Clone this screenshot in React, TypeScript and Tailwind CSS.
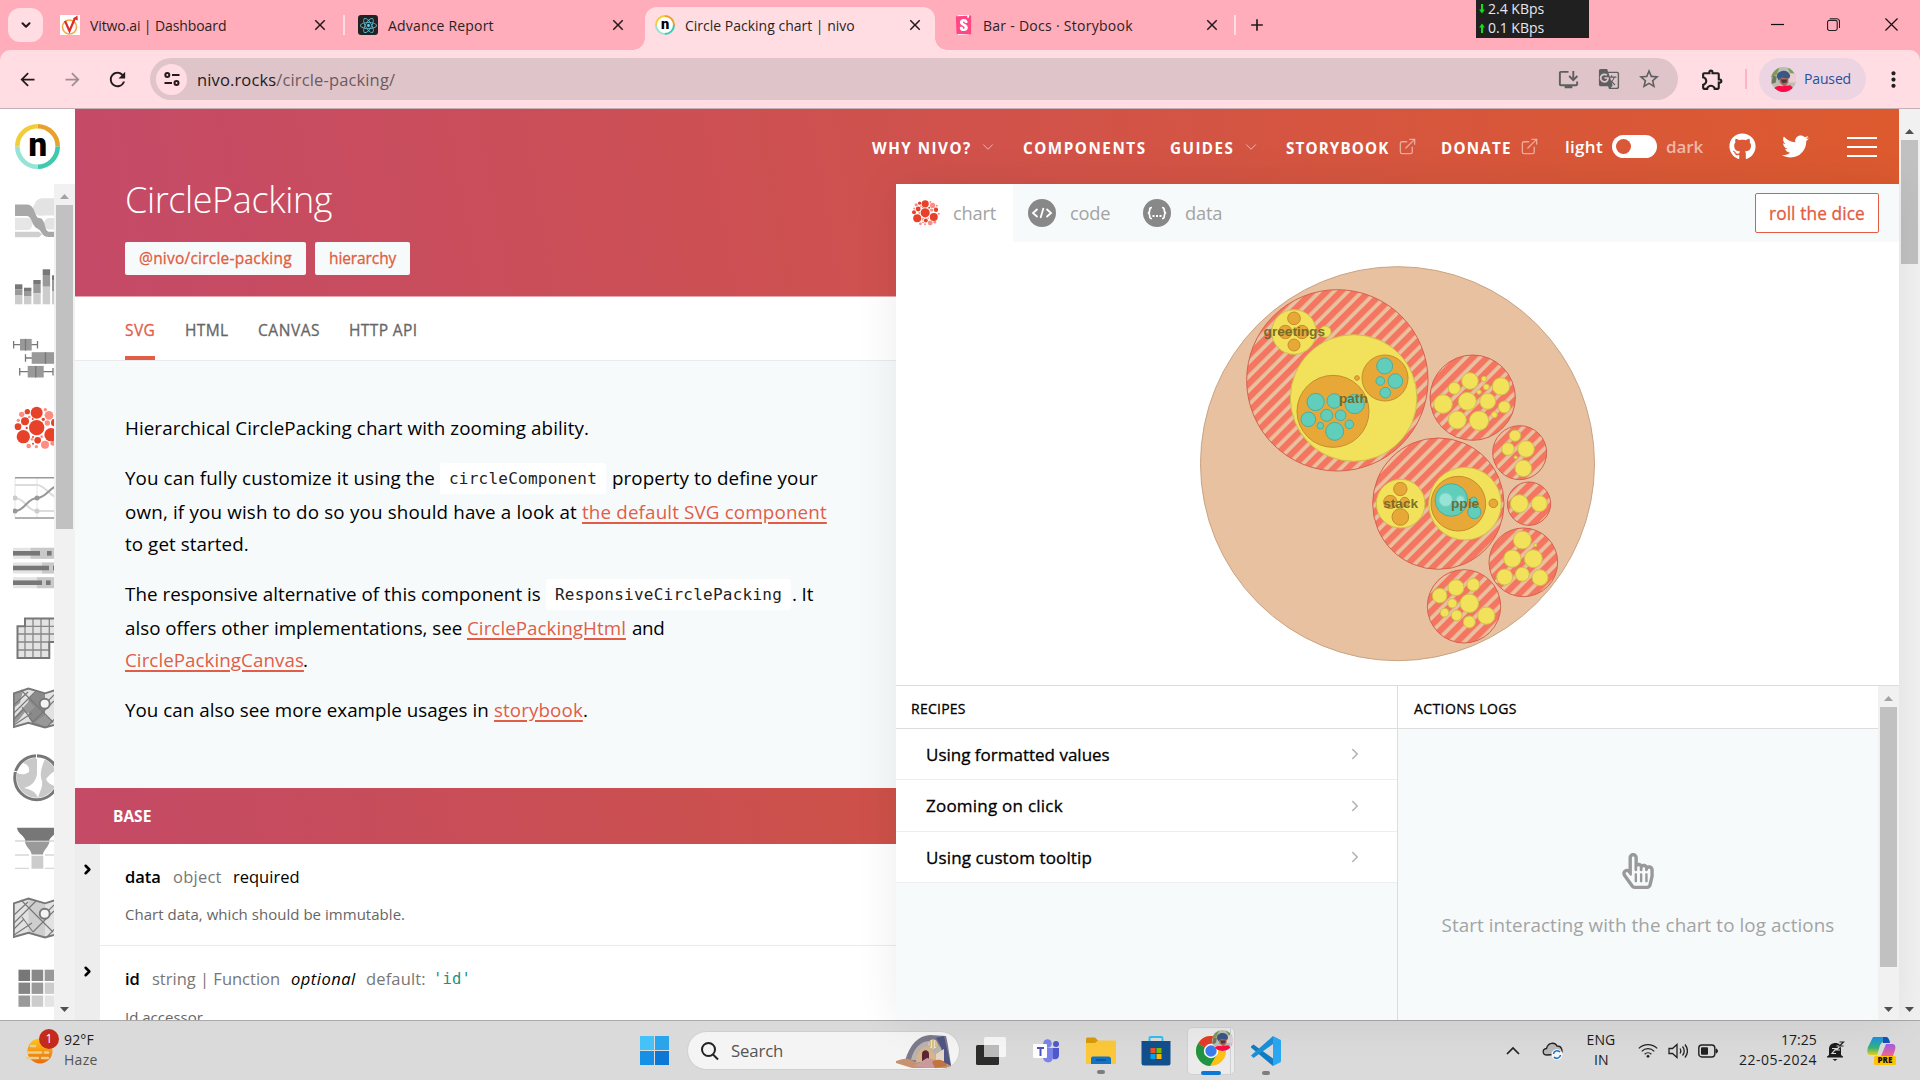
import React from "react";
import {
  MdArrowBack, MdArrowForward, MdRefresh, MdOutlineInstallDesktop, MdGTranslate,
  MdStarBorder, MdOutlineExtension, MdMoreVert, MdAdd, MdClose,
} from "react-icons/md";
import { FaGithub, FaTwitter, FaRegHandPointer, FaReact } from "react-icons/fa";
import { FiChevronDown, FiChevronRight, FiExternalLink } from "react-icons/fi";
import { SiStorybook } from "react-icons/si";

function T({ c, children }: { c: string; children: React.ReactNode }) {
  return <span className={"block shrink-0 whitespace-nowrap " + c}>{children}</span>;
}

function NivoLogo({ className }: { className: string }) {
  return (
    <svg viewBox="0 0 45 45" className={className}>
      <circle cx="22.5" cy="22.5" r="20" fill="#fff" />
      <g fill="none" strokeWidth="4.6">
        <path d="M22.5 2.3A20.2 20.2 0 0 1 42.7 22.5" stroke="#e8a12c" />
        <path d="M42.7 22.5A20.2 20.2 0 0 1 22.5 42.7" stroke="#3fc9ae" />
        <path d="M22.5 42.7A20.2 20.2 0 0 1 2.3 22.5" stroke="#97e3d5" />
        <path d="M2.3 22.5A20.2 20.2 0 0 1 22.5 2.3" stroke="#f1cd3a" />
      </g>
      <text x="22.9" y="31.6" textAnchor="middle" fontFamily="Roboto, sans-serif" fontWeight="900" fontSize="33" fill="#000">n</text>
    </svg>
  );
}

const packDark = [
  [110, 983, 23], [110, 938, 18], [70, 1010, 20], [153, 1004, 20], [75, 964, 12], [82, 935, 8],
  [54, 980, 10], [164, 968, 11], [113, 1021, 10], [130, 958, 5], [80, 984, 3.5], [98, 957, 3], [99, 1011, 3], [99, 1031, 3],
];
const packLight = [
  [147, 946, 13], [135, 1034, 12], [65, 943, 8], [136, 929, 5], [55, 961, 5], [142, 969, 8], [86, 1038, 7],
  [109, 1040, 5], [88, 951, 4], [96, 1018, 4], [158, 1030, 7], [125, 1010, 4], [178, 988, 5], [168, 948, 5],
];
function PackIcon({ className }: { className: string }) {
  return (
    <svg viewBox="39 909 150 150" className={className}>
      {packLight.map(([x, y, r], i) => <circle key={i} cx={x} cy={y} r={r} fill="#ff8c80" />)}
      {packDark.map(([x, y, r], i) => <circle key={i} cx={x} cy={y} r={r} fill="#e8412a" />)}
    </svg>
  );
}

function Tab({ icon, title, tw, active, w, close = "mr-[11px]", sep }: { icon: React.ReactNode; title: string; tw: string; active?: boolean; w: string; close?: string; sep?: boolean }) {
  return (
    <div className={"flex h-[43px] shrink-0 items-center rounded-t-[12px] pb-[7px] " + w + (active ? " bg-[#ffdde3]" : "")}>
      <div className="ml-[10px] size-[20px] shrink-0">{icon}</div>
      <T c={"ml-[10px] pt-px text-[14px] leading-[20px] text-[#2b1f22] " + tw}>{title}</T>
      <MdClose className={"ml-auto size-[18px] shrink-0 text-[#241a1c] " + close} />
      {sep && <div className="h-[20px] w-[2px] bg-[#ffdde3]" />}
    </div>
  );
}

function BrowserChrome() {
  return (
    <div className="h-[109px] w-full shrink-0 bg-[#ffacbb]">
      <div className="flex h-[50px] items-start">
        <div className="ml-[8px] mt-[8px] flex h-[34px] w-[35px] items-center justify-center rounded-[12px] bg-[#ffdde3]">
          <FiChevronDown className="size-[14px] stroke-[3.5] text-[#241a1c]" />
        </div>
        <div className="ml-[7px] flex pt-[7px]">
          <Tab w="w-[298px] pr-[3px]" close="mr-[14px]" tw="w-[136px] tracking-[-0.1px]" title="Vitwo.ai | Dashboard" sep icon={
            <svg viewBox="0 0 20 20" className="size-[20px]"><rect width="20" height="20" fill="#fff" /><circle cx="9.5" cy="12" r="7" fill="none" stroke="#f3a84b" strokeWidth="1.6" /><path d="M5 6l4.5 10L15 3" fill="none" stroke="#e02b2b" strokeWidth="2.2" /><path d="M13 3.5L17.5.5l.3 5z" fill="#e02b2b" /></svg>
          } />
          <Tab w="w-[297px]" close="mr-[18px]" tw="w-[106px] tracking-[0.18px]" title="Advance Report" icon={
            <div className="flex size-[20px] items-center justify-center rounded-[3px] bg-[#222]"><FaReact className="size-[17px] text-[#61c9e0]" /></div>
          } />
          <div className="relative">
            <Tab w="w-[290px]" active tw="w-[170px]" title="Circle Packing chart | nivo" icon={<NivoLogo className="size-[20px]" />} />
            <div className="absolute bottom-0 left-[-12px] size-[12px] bg-[radial-gradient(circle_at_0_0,transparent_11.5px,#ffdde3_12px)]" />
            <div className="absolute bottom-0 right-[-12px] size-[12px] bg-[radial-gradient(circle_at_100%_0,transparent_11.5px,#ffdde3_12px)]" />
          </div>
          <Tab w="w-[299px] pl-[8px]" close="mr-[13px]" tw="w-[150px] tracking-[0.27px]" title="Bar - Docs · Storybook" icon={
            <div className="flex size-[20px] items-center justify-center"><SiStorybook className="h-[20px] w-[19px] bg-[linear-gradient(90deg,transparent_20%,#fff_20%,#fff_80%,transparent_80%)] text-[#ff4785]" /></div>
          } />
          <div className="mt-[8px] h-[20px] w-[2px] bg-[#ffdde3]" />
          <MdAdd className="ml-[11px] mt-[8px] size-[20px] text-[#241a1c]" />
        </div>
        <div className="ml-[209px] h-[38px] w-[113px] bg-[#202020] pl-[3px]">
          <div className="flex h-[18px] items-center">
            <svg viewBox="0 0 7 12" className="h-[10px] w-[6px]"><path d="M2.3 0h2.4v6.5H7L3.500 11.500 0 6.500h2.300z" fill="#12e012" /></svg>
            <T c="ml-[3px] w-[56px] text-[14px] leading-[18px] text-[#e6e6f0]">2.4 KBps</T>
          </div>
          <div className="flex h-[19px] items-center">
            <svg viewBox="0 0 7 12" className="h-[10px] w-[6px] rotate-180"><path d="M2.3 0h2.4v6.5H7L3.500 11.500 0 6.500h2.300z" fill="#12e012" /></svg>
            <T c="ml-[3px] w-[56px] text-[14px] leading-[18px] text-[#e6e6f0]">0.1 KBps</T>
          </div>
        </div>
        <svg viewBox="0 0 14 14" className="ml-[182px] mt-[18px] h-[13px] w-[13px]"><path d="M0 7h14" stroke="#111" strokeWidth="1.3" /></svg>
        <svg viewBox="0 0 14 14" className="ml-[43px] mt-[18px] h-[13px] w-[13px]" fill="none" stroke="#222" strokeWidth="1.2"><rect x=".6" y="2.600" width="10.400" height="10.800" rx="2" /><path d="M3 .8h7.500a3 3 0 0 1 3 3v7" /></svg>
        <svg viewBox="0 0 14 14" className="ml-[45px] mt-[18px] h-[13px] w-[13px]"><path d="M.5.5l13 13M13.500.5l-13 13" stroke="#111" strokeWidth="1.3" /></svg>
      </div>
      <div className="flex h-[59px] items-start rounded-t-[10px] border-b border-[#c4b0b5] bg-[#ffdde3] pt-[8px]">
        <div className="flex h-[42px] items-center text-[#241a1c]">
          <MdArrowBack className="ml-[17px] size-[21px]" />
          <MdArrowForward className="ml-[24px] size-[21px] text-[#a08c91]" />
          <MdRefresh className="ml-[23px] size-[23px]" />
        </div>
        <div className="ml-[21px] flex h-[42px] w-[1528px] items-center rounded-full bg-[#dfc5ca]">
          <div className="ml-[6px] flex size-[31px] items-center justify-center rounded-full bg-[#ffdde3]">
            <svg viewBox="0 0 16 14" className="h-[14px] w-[16px]" fill="none" stroke="#241a1c" strokeWidth="2"><circle cx="3.300" cy="3" r="2" /><path d="M8 3h7.500M.5 11H8" /><circle cx="12.500" cy="11" r="2" /></svg>
          </div>
          <T c="ml-[10px] mt-[2px] w-[198px] text-[16.5px] leading-[24px] tracking-[0.14px] text-[#6b5b60]"><span className="text-[#241a1c]">nivo.rocks</span>/circle-packing/</T>
          <MdOutlineInstallDesktop className="ml-auto size-[23px] text-[#5f5f62]" />
          <MdGTranslate className="ml-[18px] size-[22px] text-[#5f5f62]" />
          <MdStarBorder className="ml-[17px] mr-[17px] size-[24px] text-[#5f5f62]" />
        </div>
        <div className="flex h-[42px] items-center">
          <MdOutlineExtension className="ml-[22px] size-[25px] text-[#1f1f1f]" />
          <div className="ml-[20px] h-[20px] w-[2px] bg-[#ffb3c0]" />
          <div className="ml-[12px] flex h-[42px] w-[107px] items-center rounded-full bg-[#ecd4e2]">
            <Avatar className="ml-[12px] size-[25px]" />
            <T c="ml-[8px] w-[47px] text-[14px] leading-[20px] tracking-[-0.14px] text-[#2550a0]">Paused</T>
          </div>
          <MdMoreVert className="ml-[15px] size-[25px] text-[#1f1f1f]" />
        </div>
      </div>
    </div>
  );
}

function Avatar({ className }: { className: string }) {
  return (
    <svg viewBox="0 0 26 26" className={className}>
      <defs><clipPath id="avatar-clip"><circle cx="13" cy="13" r="13" /></clipPath></defs>
      <g clipPath="url(#avatar-clip)">
        <rect width="26" height="26" fill="#b9bfb4" />
        <path d="M0 0h9l-3 8-6 3zM17 0h9v7l-6-1z" fill="#7d9b58" /><path d="M18 7h8v9h-8z" fill="#eccdd3" />
        <path d="M2 9l4 1-1 6-5 2z" fill="#6f7a5c" />
        <path d="M9 9h9v7l-4 5-5-5z" fill="#a86a55" />
        <path d="M6 10c0-7 12-9 14-1l-1 3-8-1-3 3z" fill="#3c5685" />
        <path d="M2 26c1-6 5-7 10-6l8-1c3 2 4 5 4 8z" fill="#fb0a45" />
        <path d="M10 13l7 0-1 3-4 1z" fill="#4e3540" />
      </g>
    </svg>
  );
}

function MapIcon({ dark }: { dark?: boolean }) {
  const s = "#777";
  return (
    <svg viewBox="0 0 50 50" className="size-[50px] shrink-0">
      <path d="M.8 10.300L15.500 5.500 32 10.300 48 5.500V40l-16 4.500-16.500-4.700L.8 44z" fill="#e2e2e2" />
      <path d="M15.500 5.500L32 10.300v34.200l-16.500-4.700z" fill={dark ? "#8a8a8a" : "#cecece"} />
      {dark && <path d="M.8 10.300L10 7.500 7 20 .8 25zM.8 35L16 18l6 6-12 10-9 7zM32 32l9 7-9 5-10-5z" fill="#989898" />}
      {dark && <path d="M10 7.500l5.500-2 8 3-8 7z M2 42l10-13 7 11z" fill="#e2e2e2" />}
      <g fill="none" stroke={s} strokeWidth="1.100">
        <path d="M1 30L23 8M1 22L15 9M8 7l24 24 8 8M1 36l10-10M9 24l11 15M1 42l18-12M20 39L41 18M34 44L48 29M41 12l-7 7" />
      </g>
      <path d="M.8 10.300L15.500 5.500 32 10.300 48 5.500V40l-16 4.500-16.500-4.700L.8 44z" fill="none" stroke={s} strokeWidth="1.900" />
      <circle cx="31.700" cy="20.700" r="5" fill="#f4f4f4" stroke={s} strokeWidth="1.900" />
    </svg>
  );
}

const stacked = [[2, 21.3, 26.3, 32], [11, 24.7, 28, 33], [20.3, 17, 21, 30.3], [29.7, 6.3, 12, 23.7], [39, 12.3, 17.7, 28]];
const boxes = [[11.7, 7, 18.7, 0.6, 24.5, 12.5], [25, 18.7, 44, 12.5, 50, 32.5], [38.7, 14.7, 30.7, 6.7, 40, 22.7]];
const heat = ["#777", "#888", "#999", "#858585", "#999", "#ccc", "#999", "#ccc", "#e4e4e4"];

function Sidebar() {
  const ic = "size-[50px] shrink-0";
  return (
    <div className="flex w-[75px] shrink-0 flex-col bg-white">
      <div className="flex h-[75px] shrink-0 items-center justify-center"><NivoLogo className="size-[45px]" /></div>
      <div className="flex min-h-0 flex-1">
        <div className="ml-[13px] flex w-[41px] shrink-0 flex-col gap-[20px] overflow-hidden pt-[9px]">
          <svg viewBox="0 0 50 50" className={ic}>
            <path d="M2 24.700H14C18 24.700 19 27 20 30l-1 3c-1 3-2 4-5 4H2z" fill="#e6e6e6" /><path d="M50 5.300H30C21 5.300 22 14 19 15c2 5 5 9 12 7.500h19zM50 25H36c-4 0-4 4-6 6 2 3 3 5.500 6 5.500h14z" fill="#e3e3e3" /><path d="M2 38.700h24l3 2.500-3 3.100H2z" fill="#cfcfcf" />
            <path d="M2 11.500h12C22 11.500 22 25 26 25c7 0 5 13.700 10 13.700h14V44H36c-8 0-7-7-11-8-6-2-6-13-11-13H2z" fill="#a8a8a8" />
          </svg>
          <svg viewBox="0 0 50 50" className={ic}>
            {stacked.map(([x, a, b, c]) => <g key={x}><rect x={x} y={a} width="7.400" height={b - a} fill="#777" /><rect x={x} y={b} width="7.400" height={c - b} fill="#999" /><rect x={x} y={c} width="7.400" height={41.3 - c} fill="#ccc" /></g>)}
          </svg>
          <svg viewBox="0 0 50 50" className={ic}>
            {boxes.map(([y, a, b, l, r, m]) => <g key={y} stroke="#777" strokeWidth="1.300"><path d={`M${l} ${y}H${r}M${l} ${y - 3.7}v7.400M${r} ${y - 3.7}v7.400`} fill="none" /><rect x={a} y={y - 5.8} width={b - a} height="11.600" fill="#999" stroke="none" /><path d={`M${m} ${y - 5.8}v11.600`} /></g>)}
          </svg>
          <PackIcon className={ic} />
          <svg viewBox="0 0 50 50" className={ic} fill="none">
            <path d="M2 5v40M24 5v40" stroke="#eee" strokeWidth="1.500" /><path d="M2 12h22c9 0 12 13 24 13M2 25c10 0 12 13 22 13h26" stroke="#dcdcdc" strokeWidth="2" /><path d="M2 38c10 0 12-13 22-13S37 12 48 12" stroke="#979797" strokeWidth="2" />
            <path d="M2 4.700h48M2 45h48" stroke="#999" strokeWidth="1.400" />
            <circle cx="2" cy="25" r="2.500" fill="#ccc" /><circle cx="24" cy="38" r="2.500" fill="#ccc" /><circle cx="24" cy="25" r="2.500" fill="#999" /><circle cx="2" cy="38" r="2.500" fill="#999" />
          </svg>
          <svg viewBox="0 0 50 50" className={ic}>
            {[[10.3, 27, 34, 17.7], [25, 36, 40, 29], [39.7, 29, 33, 24]].map(([y, w, s, k]) => <g key={y}><rect x="0" y={y - 5.5} width="50" height="11" fill="#e4e4e4" /><rect x={k} y={y - 5.5} width="50" height="11" fill="#c9c9c9" /><rect x="0" y={y - 2.3} width={w} height="4.600" fill="#777" /><rect x={s} y={y - 2.3} width="4.600" height="4.600" fill="#777" /></g>)}
          </svg>
          <svg viewBox="0 0 50 50" className={ic}>
            <path d="M4.500 13.300H12V5.500h38V29H36.300v16H4.500z" fill="#e3e3e3" /><path d="M12 13.300h38M4.500 21h46M4.500 29h32M4.500 37h32M12 13v32M20 5v40M28 5v40M36.300 5v30M44 5v24" stroke="#888" strokeWidth="1.300" />
            <path d="M4.500 13.300H12V5.500h38V29H36.300v16H4.500z" fill="none" stroke="#777" strokeWidth="2" />
          </svg>
          <MapIcon dark />
          <svg viewBox="0 0 50 50" className={ic}>
            <circle cx="23.700" cy="24.700" r="20" fill="#c9c9c9" /><path d="M24 4h9c-4 8-7 17-4 24 1 6-2 10-4 17-2-6-6-8-14-10 8-2 12-7 13-14zM2 19c3 2 9 4 14 0 1-5-2-8-6-9zM46 17c-5 0-9 4-13 9 2 5 6 6 13 9z" fill="#fff" />
            <circle cx="23.700" cy="24.700" r="22" fill="none" stroke="#777" strokeWidth="3" /><path d="M23.500 0v6M0 18l5 1" stroke="#fff" />
          </svg>
          <svg viewBox="0 0 50 50" className={ic}>
            <path d="M2 18h12M2 32h14M2 45.300h14M36 18h12M32 32h16M32 45.300h16" stroke="#d8d8d8" strokeWidth="1.300" />
            <path d="M4 4.700h41c-1 7-7 8-9 13H12.500C11 12 5 11 4 4.700z" fill="#777" /><path d="M12 18.500h24.500c-1 6-6 8-6.500 13H18.500c0-5-6-7-6.500-13z" fill="#9a9a9a" /><path d="M18.500 32.700h11.800v13H18.500z" fill="#ccc" />
          </svg>
          <MapIcon />
          <svg viewBox="0 0 50 50" className={ic}>
            {heat.map((f, i) => <rect key={i} x={5.5 + (i % 3) * 13.1} y={6.7 + Math.floor(i / 3) * 12.9} width="11.600" height="11.300" fill={f} />)}
          </svg>
        </div>
        <Scrollbar w="w-[21px]" thumb="h-[324px] w-[17px]" top="text-[#a3a3a3]" />
      </div>
    </div>
  );
}

function Scrollbar({ w, thumb, top }: { w: string; thumb: string; top: string }) {
  return (
    <div className={"flex shrink-0 flex-col items-center bg-[#f1f1f1] " + w}>
      <div className={"flex h-[21px] shrink-0 items-center justify-center pt-[3px] " + top}><svg viewBox="0 0 9 5" className="h-[5px] w-[9px]"><path d="M0 5L4.500 0 9 5z" fill="currentColor" /></svg></div>
      <div className={"shrink-0 bg-[#c1c1c1] " + thumb} />
      <div className="mt-auto flex h-[22px] items-center text-[#505050]"><svg viewBox="0 0 9 5" className="h-[5px] w-[9px]"><path d="M0 0L4.500 5 9 0z" fill="currentColor" /></svg></div>
    </div>
  );
}

function Nav() {
  const n = "mt-[2px] text-[15.2px] font-bold leading-[20px] ";
  return (
    <div className="flex h-[75px] w-full shrink-0 items-center bg-[linear-gradient(80deg,#c44a68,#dd5a2e)] bg-[length:1824px_187px] text-white">
      <T c={n + "ml-[797px] w-[100px] tracking-[1.5px]"}>WHY NIVO?</T>
      <FiChevronDown className="ml-[7px] size-[18px] stroke-[1.3] opacity-60" />
      <T c={n + "ml-[26px] w-[123px] tracking-[1.55px]"}>COMPONENTS</T>
      <T c={n + "ml-[24px] w-[65px] tracking-[1.45px]"}>GUIDES</T>
      <FiChevronDown className="ml-[7px] size-[18px] stroke-[1.3] opacity-60" />
      <T c={n + "ml-[26px] w-[105px] tracking-[1.15px]"}>STORYBOOK</T>
      <FiExternalLink className="ml-[7px] size-[19px] stroke-[1.7] opacity-50" />
      <T c={n + "ml-[24px] w-[71px] tracking-[1.2px]"}>DONATE</T>
      <FiExternalLink className="ml-[8px] size-[19px] stroke-[1.7] opacity-50" />
      <T c="ml-[26px] w-[38px] text-[17px] font-semibold leading-[22px] tracking-[0.3px]">light</T>
      <div className="ml-[9px] flex h-[23px] w-[45px] items-center rounded-full bg-white pl-[4px]"><div className="size-[15px] rounded-full bg-[#d95837]" /></div>
      <T c="ml-[9px] w-[37px] text-[17px] font-semibold leading-[22px] tracking-[-0.13px] text-[#f0b8a6]">dark</T>
      <FaGithub className="ml-[26px] size-[27px]" />
      <FaTwitter className="ml-[26px] size-[27px]" />
      <div className="ml-[38px] flex w-[30px] flex-col gap-[7px]"><i className="h-[2px] bg-white" /><i className="h-[2px] bg-white" /><i className="h-[2px] bg-white" /></div>
    </div>
  );
}

const P = "text-[18.8px] text-black ";
const A = "text-[18.8px] text-[#e25d47] underline decoration-2 underline-offset-[3px] ";
const CODE = "flex h-[31px] items-center rounded-[3px] bg-white px-[9px] text-[#222] ";
const MONO = "pt-[2px] font-['DejaVu_Sans_Mono',monospace] text-[16px] tracking-[0.24px] ";
const MEDIUM = "[-webkit-text-stroke:0.3px_currentColor] ";

function Left() {
  return (
    <div className="flex w-[821px] shrink-0 flex-col bg-white">
      <div className="h-[113px] shrink-0 border-b border-[#e9a6ab] bg-[linear-gradient(80deg,#c44a68,#dd5a2e)] bg-[length:1824px_187px] bg-[position:0_-75px] pl-[50px]">
        <T c="h-[32px] w-[207px] text-[36px] font-light leading-[32px] tracking-[-0.4px] text-white">CirclePacking</T>
        <div className={MEDIUM + "mt-[26px] flex gap-[9px] text-[15.5px] text-[#e25d41]"}>
          <div className="flex h-[33px] w-[181px] items-center justify-center rounded-[2px] bg-[#f6fafb]"><T c="w-[153px] tracking-[0.23px]">@nivo/circle-packing</T></div>
          <div className="flex h-[33px] w-[95px] items-center justify-center rounded-[2px] bg-[#f6fafb]"><T c="w-[67px] tracking-[-0.1px]">hierarchy</T></div>
        </div>
      </div>
      <div className={MEDIUM + "flex h-[64px] shrink-0 items-end gap-[30px] border-b border-[#e8ebec] pl-[50px] text-[15.5px] leading-[20px] tracking-[0.4px] text-[#666]"}>
        <div className="border-b-4 border-[#e25d47] pb-[16px] text-[#e25d47]"><T c="w-[30px]">SVG</T></div>
        <div className="pb-[20px]"><T c="w-[43px]">HTML</T></div>
        <div className="pb-[20px]"><T c="w-[61px] tracking-[0.55px]">CANVAS</T></div>
        <div className="pb-[20px]"><T c="w-[68px]">HTTP API</T></div>
      </div>
      <div className="h-[427px] shrink-0 bg-[#f6fafb] pl-[50px] pt-[51px]">
        <div className="flex h-[32px] items-center"><T c={P + "w-[464px] tracking-[0.08px]"}>Hierarchical CirclePacking chart with zooming ability.</T></div>
        <div className="mt-[18px] flex h-[32px] items-center">
          <T c={P + "w-[310px] tracking-[0.1px]"}>You can fully customize it using the</T>
          <div className={CODE + "ml-[5px] w-[166px]"}><T c={MONO + "w-[147px]"}>circleComponent</T></div>
          <T c={P + "ml-[6px] w-[206px] tracking-[0.08px]"}>property to define your</T>
        </div>
        <div className="mt-[2px] flex h-[32px] items-center">
          <T c={P + "w-[452px] tracking-[0.17px]"}>own, if you wish to do so you should have a look at</T>
          <T c={A + "ml-[5px] w-[245px] tracking-[0.15px]"}>the default SVG component</T>
        </div>
        <div className="flex h-[32px] items-center"><T c={P + "w-[124px] tracking-[0.08px]"}>to get started.</T></div>
        <div className="mt-[18px] flex h-[32px] items-center">
          <T c={P + "w-[416px] tracking-[0.035px]"}>The responsive alternative of this component is</T>
          <div className={CODE + "ml-[5px] w-[245px]"}><T c={MONO + "w-[227px]"}>ResponsiveCirclePacking</T></div>
          <T c={P + "ml-[1px] w-[21px] tracking-[-0.1px]"}>. It</T>
        </div>
        <div className="mt-[2px] flex h-[32px] items-center">
          <T c={P + "w-[337px]"}>also offers other implementations, see</T>
          <T c={A + "ml-[5px] w-[159px] tracking-[0.04px]"}>CirclePackingHtml</T>
          <T c={P + "ml-[6px] w-[32px] tracking-[-0.4px]"}>and</T>
        </div>
        <div className="flex h-[32px] items-center"><T c={A + "w-[178px] tracking-[0.04px]"}>CirclePackingCanvas</T><T c={P + "w-[5px]"}>.</T></div>
        <div className="mt-[18px] flex h-[32px] items-center"><T c={P + "w-[364px] tracking-[0.03px]"}>You can also see more example usages in</T><T c={A + "ml-[5px] w-[89px] tracking-[0.1px]"}>storybook</T><T c={P + "w-[5px]"}>.</T></div>
      </div>
      <div className="flex h-[56px] shrink-0 items-center bg-[linear-gradient(80deg,#c44a66,#cd5148)] pl-[38px] pt-[2px]"><T c="w-[39px] text-[15.5px] font-bold text-white">BASE</T></div>
      <div className="flex min-h-0 flex-1">
        <div className="flex w-[25px] shrink-0 flex-col items-center bg-[#ededed] pt-[18px]">
          <FiChevronRight className="size-[15px] stroke-[4] text-black" />
          <FiChevronRight className="mt-[87px] size-[15px] stroke-[4] text-black" />
        </div>
        <div className="flex-1 overflow-hidden text-[16.500px] leading-[24px]">
          <div className="h-[102px] border-b border-[#ebebeb] pl-[25px] pt-[21px]">
            <div className="flex">
              <T c="w-[36px] font-semibold text-black">data</T>
              <T c="ml-[12px] w-[49px] tracking-[0.25px] text-[#777]">object</T>
              <T c="ml-[11px] w-[67px] text-black">required</T>
            </div>
            <T c="mt-[13px] w-[280px] text-[15px] tracking-[0.03px] text-[#666]">Chart data, which should be immutable.</T>
          </div>
          <div className="pl-[25px] pt-[21px]">
            <div className="flex">
              <T c="w-[15px] font-semibold text-black">id</T>
              <T c="ml-[12px] w-[128px] text-[#777]">string | Function</T>
              <T c="ml-[11px] w-[65px] tracking-[0.5px] italic text-black">optional</T>
              <T c="ml-[10px] w-[60px] tracking-[0.15px] text-[#777]">default:</T>
              <T c="ml-[7px] w-[38px] font-['DejaVu_Sans_Mono',monospace] text-[15.5px] tracking-[0.2px] text-[#1a9186]">'id'</T>
            </div>
            <T c="mt-[14px] w-[77px] text-[15px] text-[#666]">Id accessor</T>
          </div>
        </div>
      </div>
    </div>
  );
}

const red = [[472, 391, 272], [878, 443, 128], [1019, 608, 81], [775, 761, 197], [1047, 761, 65], [1030, 937, 103], [852, 1069, 110]];
const yellow = [
  [342, 246, 67], [436, 245, 17], [521, 444, 190], [662, 761, 73], [855, 761, 109],
  [870, 393, 25], [912, 387, 8], [963, 409, 26], [823, 415, 18], [919, 411, 9], [897, 426, 7], [789, 462, 28], [862, 454, 27], [923, 454, 24], [973, 471, 18], [943, 494, 9], [832, 510, 27], [897, 512, 29],
  [1005, 557, 17], [984, 597, 19], [1038, 597, 25], [1007, 622, 5], [1030, 655, 25],
  [1018, 761, 27], [1078, 761, 24],
  [1027, 870, 27], [1066, 885, 5], [997, 926, 26], [1060, 926, 27], [974, 981, 24], [1027, 973, 21], [1080, 983, 24],
  [828, 1013, 24], [880, 1004, 19], [779, 1037, 22], [817, 1060, 14], [868, 1060, 28], [794, 1088, 13], [830, 1096, 16], [868, 1116, 18], [919, 1097, 26],
];
const orange = [[342, 205, 19], [316, 246, 20], [366, 246, 20], [342, 285, 18], [459, 484, 108], [615, 384, 69], [531, 384, 7], [661, 717, 20], [631, 756, 20], [674, 756, 14], [661, 801, 25], [835, 761, 82], [940, 760, 13]];
const teal = [[614, 348, 24], [646, 393, 22], [601, 393, 13], [616, 428, 16], [407, 456, 26], [463, 453, 22], [524, 462, 29], [385, 508, 22], [440, 496, 18], [482, 496, 16], [421, 527, 10], [508, 523, 13], [464, 544, 27], [814, 750, 49], [881, 751, 10], [883, 786, 20]];
const mint = [[797, 749, 20], [841, 749, 12]];

function CirclePacking() {
  const ring = (list: number[][], fill: string, stroke: string) => list.map(([x, y, r], i) => <circle key={fill + i} cx={x} cy={y} r={r} fill={fill} stroke={stroke} strokeWidth="3" />);
  return (
    <svg viewBox="0 0 1290 1260" className="h-[420px] w-[430px] shrink-0">
      <defs>
        <pattern id="stripes" width="30" height="30" patternUnits="userSpaceOnUse" patternTransform="rotate(-45)"><rect width="30" height="18.750" fill="#f47560" /></pattern>
      </defs>
      {ring([[652.5, 641, 591]], "#e8c1a0", "#c9a483")}
      {ring(red, "url(#stripes)", "#d5604e")}
      {ring(yellow, "#f1e15b", "#cfc04a")}
      {ring(orange, "#e8a838", "#c58d2d")}
      {ring(teal, "#61cdbb", "#4eac9d")}
      {ring(mint, "#97e3d5", "#7fd2c3")}
      <g fontFamily="'Liberation Sans', Arial, sans-serif" fontWeight="700" fontSize="41" fill="#6e6524" fillOpacity=".92" textAnchor="middle">
        <text x="343" y="258">greetings</text><text x="520" y="459">path</text><text x="662" y="774">stack</text><text x="855" y="774">ppie</text>
      </g>
    </svg>
  );
}

function Right() {
  const tab = "text-[18.300px] leading-[24px] tracking-[-0.2px] text-[#a3a3a3] ";
  return (
    <div className="relative z-10 flex min-w-0 flex-1 flex-col bg-[#f6fafb] shadow-[0_0_40px_rgba(0,0,0,0.08)]">
      <div className="flex h-[58px] shrink-0 items-stretch">
        <div className="flex w-[117px] items-center bg-white"><PackIcon className="ml-[15px] size-[30px]" /><T c={tab + "ml-[12px] w-[42px]"}>chart</T></div>
        <div className="flex flex-1 items-center">
          <svg viewBox="0 0 28 28" className="ml-[15px] size-[28px]"><circle cx="14" cy="14" r="14" fill="#888" /><path d="M9.500 10L5 14l4.500 4M18.500 10l4.500 4-4.500 4M15.500 9l-3 10" fill="none" stroke="#fff" strokeWidth="1.800" /></svg>
          <T c={tab + "ml-[14px] w-[41px]"}>code</T>
          <svg viewBox="0 0 28 28" className="ml-[32px] size-[28px]"><circle cx="14" cy="14" r="14" fill="#888" /><g fill="none" stroke="#fff" strokeWidth="1.700"><path d="M9 8.500c-2 0-2.300.8-2.300 2.500S6.500 14 4.800 14c1.700 0 1.900 1 1.900 3s.3 2.500 2.300 2.500M19 8.500c2 0 2.300.8 2.300 2.500s.2 3 1.900 3c-1.700 0-1.900 1-1.900 3s-.3 2.500-2.300 2.500" /><path d="M9.500 17h2M13 17h2M16.500 17h2" strokeWidth="2" /></g></svg>
          <T c={tab + "ml-[14px] w-[37px]"}>data</T>
          <div className={MEDIUM + "ml-auto mr-[20px] flex h-[40px] w-[124px] items-center justify-center rounded-[2px] border border-[#e25d41] bg-white pt-px text-[17.3px] text-[#e25d41]"}><T c="w-[96px] tracking-[0.1px]">roll the dice</T></div>
        </div>
      </div>
      <div className="flex h-[444px] shrink-0 border-b border-[#ddd] bg-white pl-[284px] pt-[8px]"><CirclePacking /></div>
      <div className="flex min-h-0 flex-1">
        <div className="flex w-[502px] shrink-0 flex-col border-r border-[#ddd]">
          <div className={MEDIUM + "flex h-[43px] shrink-0 items-center border-b border-[#ddd] bg-white pl-[15px] pt-[2px] text-[14px] text-black"}><T c="w-[55px] tracking-[0.25px]">RECIPES</T></div>
          {[["Using formatted values", "w-[184px]", "h-[51px]"], ["Zooming on click", "w-[137px] tracking-[0.23px]", "h-[52px]"], ["Using custom tooltip", "w-[166px] tracking-[0.12px]", "h-[51px]"]].map(([t, w, h]) => (
            <div key={t} className={MEDIUM + "flex shrink-0 items-center border-b border-[#eceeef] bg-white pl-[30px] text-[17px] text-black " + h}>
              <T c={"pt-px " + w}>{t}</T><FiChevronRight className="ml-auto mr-[33px] size-[18px] text-[#b0b0b0]" />
            </div>
          ))}
        </div>
        <div className="flex flex-1 flex-col">
          <div className={MEDIUM + "flex h-[43px] shrink-0 items-center border-b border-[#ddd] bg-white pl-[16px] pt-[2px] text-[14px] text-black"}><T c="w-[103px] tracking-[0.4px]">ACTIONS LOGS</T></div>
          <div className="flex flex-col items-center pt-[124px]">
            <FaRegHandPointer className="size-[36px] text-[#999]" />
            <T c="mt-[23px] w-[393px] text-[18.800px] leading-[26px] tracking-[0.1px] text-[#a3a3a3]">Start interacting with the chart to log actions</T>
          </div>
        </div>
        <Scrollbar w="w-[21px]" thumb="h-[260px] w-[17px]" top="text-[#a3a3a3]" />
      </div>
    </div>
  );
}

function TrayIcons() {
  return (
    <>
      <svg viewBox="0 0 24 18" className="ml-[22px] h-[15px] w-[20px]" fill="none" stroke="#222" strokeWidth="1.500"><path d="M1 6.500a15.500 15.500 0 0 1 22 0M4.500 10a10.500 10.500 0 0 1 15 0M8 13.500a5.700 5.700 0 0 1 8 0" /><circle cx="12" cy="16" r="1.700" fill="#222" stroke="none" /></svg>
      <svg viewBox="0 0 20 18" className="ml-[10px] h-[18px] w-[20px]" fill="none" stroke="#222" strokeWidth="1.300"><path d="M1 6.500h3.500L9 2.500v13L4.500 11.500H1z" /><path d="M12 6.500c1 1.500 1 3.500 0 5M14.500 4.500c2.300 2.500 2.300 6.500 0 9M17 2.500c3 4 3 9 0 13" /></svg>
      <svg viewBox="0 0 20 14" className="ml-[10px] h-[14px] w-[20px]"><rect x=".8" y="1" width="16" height="12" rx="3" fill="none" stroke="#222" strokeWidth="1.400" /><rect x="3" y="3.200" width="7" height="7.600" rx="1" fill="#222" /><path d="M18 5c2 0 2 4 0 4z" fill="#222" stroke="#222" /></svg>
    </>
  );
}

function Taskbar() {
  return (
    <div className="flex h-[60px] w-full shrink-0 items-center border-t border-[#a9a9a9] bg-[#dadada] text-[14px] leading-[20px] text-[#1c1c1c]">
      <div className="relative ml-[25px]">
        <svg viewBox="0 0 28 28" className="size-[28px]"><defs><linearGradient id="sun" x2="0" y2="1"><stop stopColor="#ffc61a" /><stop offset="1" stopColor="#ea6a10" /></linearGradient></defs><circle cx="15" cy="14" r="12.500" fill="url(#sun)" /><path d="M6 9h4M3 15.500h13M20 15.500h3M2 21h11M17 21h6" stroke="#ead08c" strokeWidth="2.600" strokeLinecap="round" /></svg>
        <div className="absolute right-[-6px] top-[-8px] flex size-[20px] items-center justify-center rounded-full bg-[#c42b1c] text-[12px] text-white">1</div>
      </div>
      <div className="ml-[11px] w-[60px] pb-px"><T c="w-[30px] tracking-[0.15px]">92°F</T><T c="w-[34px] tracking-[0.3px] text-[#555]">Haze</T></div>
      <div className="ml-[516px] grid size-[29px] grid-cols-2 gap-px"><i className="bg-[#45c2f7]" /><i className="bg-[#2aa5ec]" /><i className="bg-[#1590e6]" /><i className="bg-[#0a78d4]" /></div>
      <div className="ml-[18px] flex h-[39px] w-[273px] items-center rounded-full border border-[#cfcfcf] bg-[#f4f4f4]">
        <svg viewBox="0 0 20 20" className="ml-[12px] size-[20px]" fill="none" stroke="#222" strokeWidth="2"><circle cx="8.500" cy="8.500" r="6.500" /><path d="M13 13.500l5 5" /></svg>
        <T c="ml-[11px] w-[52px] text-[16.800px] tracking-[-0.15px] text-[#555]">Search</T>
        <svg viewBox="0 0 57 34" className="ml-auto mr-[6px] h-[34px] w-[57px]">
          <path d="M9 27C14 10 22 2 34 1l16 1c2 8 3 16 5 29H40z" fill="#7d7a8c" /><path d="M15 26c2-10 9-19 18-19 10 0 14 8 16 20z" fill="#b8b3ae" /><path d="M48 2l7 30h-7c0-10-2-20-8-28z" fill="#4f5584" />
          <path d="M20 28c0-8 5-15 10-15s10 6 10 15z" fill="#d7b48a" /><path d="M26 29V20c0-5 7-5 7 0v9z" fill="#592638" /><circle cx="37" cy="10" r="4.500" fill="#e9e3c8" /><path d="M34 7v6M37 6v8M40 7v6" stroke="#c7972f" strokeWidth=".9" />
          <path d="M40 20l8-5v12l-8 2z" fill="#e3d6c6" /><path d="M0 27c6-2 11-4 17 0l5 2 8-2 12 4c5-3 9-2 13 1l-5 2H16L0 29z" fill="#c89170" /><path d="M18 32l13-8 9 2 4 7-12 1z" fill="#c99a9a" /><path d="M36 28c5-4 12-3 15 4l-12 2z" fill="#c17340" />
        </svg>
      </div>
      <svg viewBox="0 0 30 28" className="ml-[16px] h-[28px] w-[30px]"><rect y="8" width="23" height="20" rx="1.500" fill="#2d2d2b" /><rect x="8" y="0" width="22" height="20" rx="1.500" fill="#f6f6f6" /><rect x="8" y="8" width="15" height="12" fill="#bcbcbc" /></svg>
      <svg viewBox="0 0 27 24" className="ml-[27px] h-[24px] w-[27px]"><circle cx="14.500" cy="4.500" r="4.300" fill="#7b83eb" /><circle cx="23" cy="5" r="3" fill="#5059c9" /><path d="M19 9h7v7c0 4-3 5-6 4z" fill="#5059c9" /><path d="M9 9h11v9c0 7-9 7-10 1z" fill="#7b83eb" /><rect y="5" width="14" height="14" rx="1" fill="#fff" /><path d="M4 9h7M7.500 9v8" stroke="#4b53bc" strokeWidth="2" /></svg>
      <div className="relative ml-[26px]">
        <svg viewBox="0 0 30 27" className="h-[27px] w-[30px]"><path d="M0 2a1.500 1.500 0 0 1 1.500-1.500H9l3 3V8H0z" fill="#d99a08" /><path d="M0 6h9l3-2.500h17l1 1V27H0z" fill="#fcc83a" /><path d="M5 27v-5c0-2 1-2.500 2.500-2.500h15c1.500 0 2.500 1 2.500 2.500v5z" fill="#1173c7" /><path d="M10 23h10" stroke="#0a4f90" strokeWidth="1.500" /></svg>
        <div className="absolute left-[11px] top-[33px] h-[4px] w-[8px] rounded-full bg-[#7d7d7d]" />
      </div>
      <svg viewBox="0 0 30 30" className="ml-[25px] size-[30px]"><path d="M8.500 6V2.500C8.500 1 9.500 1 10 1h10c1 0 1.500.5 1.500 1.500V6" fill="none" stroke="#2bc0f5" strokeWidth="1.900" /><path d="M.5 5h29v22a2.500 2.500 0 0 1-2.500 2.500H3A2.500 2.500 0 0 1 .5 27z" fill="#11508c" /><path d="M9.500 12h5v5h-5z" fill="#f25022" /><path d="M15.500 12h5v5h-5z" fill="#7fba00" /><path d="M9.500 18h5v5h-5z" fill="#00a4ef" /><path d="M15.500 18h5v5h-5z" fill="#ffb900" /></svg>
      <div className="relative ml-[16px] flex h-[48px] w-[48px] items-center rounded-[5px] border border-[#d0d0d0] bg-[#ebebeb] pl-[8px]">
        <svg viewBox="0 0 30 30" className="size-[30px]"><circle cx="15" cy="15" r="15" fill="#fbc116" /><path d="M15 15L2 7.500A15 15 0 0 1 28 7.500H15z" fill="#e33b2e" /><path d="M15 15L2 7.500A15 15 0 0 0 14 30l7-12z" fill="#229342" /><circle cx="15" cy="15" r="7.200" fill="#fff" /><circle cx="15" cy="15" r="5.700" fill="#3b7ded" /></svg>
        <Avatar className="absolute left-[24px] top-[2px] size-[21px]" />
        <div className="absolute right-[3px] top-0 h-[46px] w-px bg-[#cfcfcf]" />
        <div className="absolute left-[13px] top-[43px] h-[4px] w-[20px] rounded-full bg-[#0a78d4]" />
      </div>
      <div className="relative ml-[16px]">
        <svg viewBox="0 0 30 30" className="size-[30px]"><path d="M0 10.500l2.500-2 19.500 14V30L0 11.500z" fill="#0f7cc4" /><path d="M0 19.500L22 0v8L2.500 22z" fill="#1b8fd8" /><path d="M22 0l7 3.500c.7.300 1 .8 1 1.500v20c0 .7-.3 1.200-1 1.500L22 30z" fill="#2aa7f2" /></svg>
        <div className="absolute left-[11px] top-[35px] h-[4px] w-[8px] rounded-full bg-[#7d7d7d]" />
      </div>
      <svg viewBox="0 0 14 9" className="ml-[225px] h-[9px] w-[14px]"><path d="M1 8l6-6 6 6" fill="none" stroke="#222" strokeWidth="1.700" /></svg>
      <svg viewBox="0 0 21 18" className="ml-[22px] h-[18px] w-[21px]"><path d="M5 13C0 13 0 7 4.500 6.500 6 0 13 0 15 4c5 0 6 5 4 8z" fill="#b9b9b9" stroke="#222" strokeWidth="1.300" /><circle cx="15" cy="12.500" r="5.500" fill="#f5f5f5" /><path d="M11.500 12a3.700 3.700 0 0 1 6.500-2M18.500 13a3.700 3.700 0 0 1-6.500 2" fill="none" stroke="#1270c8" strokeWidth="1.500" /></svg>
      <div className="ml-[23px] flex w-[30px] flex-col items-center pb-px"><T c="w-[29px] tracking-[0.1px]">ENG</T><T c="w-[14px]">IN</T></div>
      <TrayIcons />
      <div className="ml-[19px] flex w-[80px] flex-col items-end pb-px"><T c="w-[36px]">17:25</T><T c="w-[78px] tracking-[0.49px]">22-05-2024</T></div>
      <svg viewBox="0 0 18 20" className="ml-[10px] h-[20px] w-[18px]"><path d="M2 14V8c0-4 3-6 6.500-6S14 4 14 8v6l2 1.500v1H0v-1z" fill="#1c1c1c" /><path d="M5.500 18h5l-2.500 2z" fill="#1c1c1c" /><path d="M5 7.500h4l-4 5h4M12.500 1h4l-4 4.500h4M9.500 5h3.500l-3.500 4h3.500" fill="none" stroke="#dadada" strokeWidth="1.200" /><path d="M12.500 1h4l-4 4h4" fill="none" stroke="#222" strokeWidth="1.200" /></svg>
      <svg viewBox="0 0 29 29" className="ml-[22px] size-[29px]">
        <defs><linearGradient id="cpa" x2="0" y2="1"><stop stopColor="#1690ea" /><stop offset=".6" stopColor="#38b27a" /><stop offset="1" stopColor="#e8cf1a" /></linearGradient><linearGradient id="cpb" x2="0" y2="1"><stop stopColor="#a45be8" /><stop offset="1" stopColor="#f0668a" /></linearGradient></defs>
        <path d="M6 1h13c2 0 3 2 4 5h-6c-3 0-4 3-5 7l-2 6H3c-3 0-3-4-2-8z" fill="url(#cpa)" /><path d="M16 1h3c2 0 3 2 4 6h-7z" fill="#1452b8" /><path d="M19 8h6c3 0 4 2 3 6l-2 6H14z" fill="url(#cpb)" />
        <rect x="7" y="20" width="22" height="9" rx="1.500" fill="#ffc400" /><text x="18" y="27.300" textAnchor="middle" fontFamily="'Open Sans', sans-serif" fontWeight="800" fontSize="8" fill="#111">PRE</text>
      </svg>
    </div>
  );
}

export default function App() {
  return (
    <div className="flex h-[1080px] w-[1920px] flex-col overflow-hidden bg-white font-['Open_Sans','Noto_Sans',sans-serif]">
      <BrowserChrome />
      <div className="flex min-h-0 flex-1">
        <Sidebar />
        <div className="flex w-[1824px] shrink-0 flex-col">
          <Nav />
          <div className="flex min-h-0 flex-1"><Left /><Right /></div>
        </div>
        <Scrollbar w="w-[21px] pt-[10px]" thumb="h-[124px] w-[17px]" top="text-[#505050]" />
      </div>
      <Taskbar />
    </div>
  );
}
